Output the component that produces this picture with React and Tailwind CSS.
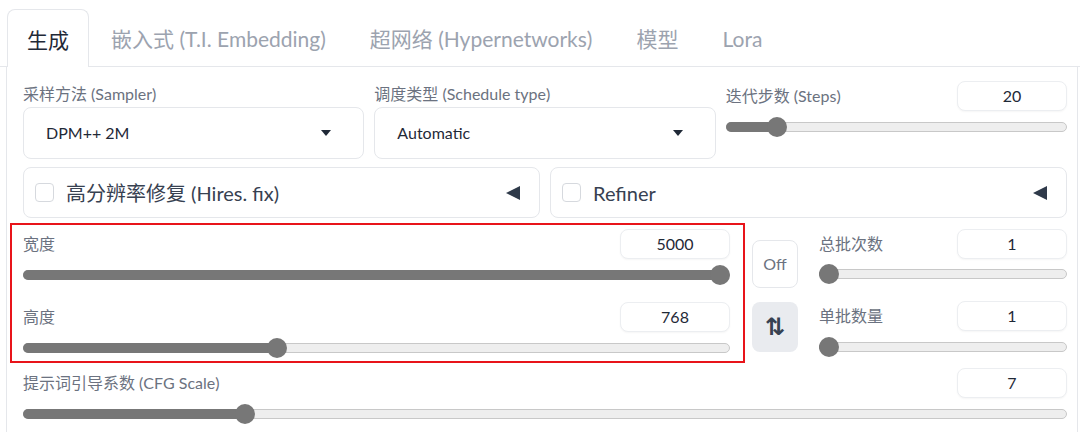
import { useState } from "react";

const font = { fontFamily: 'Lato, "Noto Sans CJK SC", sans-serif' };

function Slider({ pct }) {
  return (
    <div className="relative h-5 w-full">
      <div className="absolute left-0 right-0 top-[5px] h-[10px] rounded-full border border-[#c8c8c8] bg-[#eeeeee]" />
      <div
        className="absolute left-0 top-[5px] h-[10px] rounded-full bg-[#777777]"
        style={{ width: `calc((100% - 20px) * ${pct} + 10px)` }}
      />
      <div
        className="absolute top-0 h-5 w-5 rounded-full bg-[#777777]"
        style={{ left: `calc((100% - 20px) * ${pct})` }}
      />
    </div>
  );
}

function NumBox({ value }) {
  return (
    <div className="flex h-[30px] w-[110px] items-center justify-center rounded-lg border border-[#eceef1] bg-white text-[16px] text-[#1f2937] shadow-[0_1px_2px_rgba(0,0,0,0.04)]">
      {value}
    </div>
  );
}

function SliderField({ label, value, pct, gap = "mt-[6px]" }) {
  return (
    <div className="flex flex-col">
      <div className="flex h-[30px] items-center justify-between">
        <span className="text-[16px] text-[#6b7280]">{label}</span>
        <NumBox value={value} />
      </div>
      <div className={gap}>
        <Slider pct={pct} />
      </div>
    </div>
  );
}

function Dropdown({ label, value }) {
  return (
    <div className="flex flex-col">
      <span className="h-[26px] pt-[3px] text-[16px] leading-5 text-[#6b7280]">{label}</span>
      <div className="flex h-[52px] items-center justify-between rounded-lg border border-[#e5e7eb] bg-white pl-[22px] pr-[32px] text-[16px] text-[#1f2937]">
        <span>{value}</span>
        <svg width="10" height="6" viewBox="0 0 10 6">
          <path d="M0 0 L10 0 L5 6 Z" fill="#1f2937" />
        </svg>
      </div>
    </div>
  );
}

function Accordion({ label }) {
  return (
    <div className="flex h-[51px] items-center justify-between rounded-lg border border-[#e5e7eb] bg-white pl-[11px] pr-[19px]">
      <div className="flex items-center gap-[12px]">
        <div className="h-[19px] w-[19px] rounded-[4px] border border-[#d6d9de] bg-white" />
        <span className="text-[20px] text-[#374151]">{label}</span>
      </div>
      <svg width="14" height="14" viewBox="0 0 14 14">
        <path d="M0 7 L14 0 L14 14 Z" fill="#2f3a4a" />
      </svg>
    </div>
  );
}

export default function App() {
  const [tab] = useState("生成");
  const tabs = ["生成", "嵌入式 (T.I. Embedding)", "超网络 (Hypernetworks)", "模型", "Lora"];

  return (
    <div className="h-[432px] w-[1080px] overflow-hidden bg-white" style={font}>
      <div className="flex h-[67px] items-end border-b border-[#e5e7eb] pl-[7px]">
        {tabs.map((t) =>
          t === tab ? (
            <div
              key={t}
              className="-mb-px flex h-[58px] w-[82px] items-center justify-center rounded-t-lg border border-b-0 border-[#e5e7eb] bg-white pt-[2px] text-[21px] text-[#1f2937]"
            >
              {t}
            </div>
          ) : (
            <div key={t} className="flex h-[57px] items-center px-[22px] pt-[2px] text-[21px] text-[#9ca3af]">
              {t}
            </div>
          )
        )}
      </div>

      <div className="ml-[6px] mr-[2px] h-[365px] border-l border-r border-[#e5e7eb] pl-[16px] pr-[10px] pt-[14px]">
        <div className="grid grid-cols-3 gap-[10px]">
          <Dropdown label="采样方法 (Sampler)" value="DPM++ 2M" />
          <Dropdown label="调度类型 (Schedule type)" value="Automatic" />
          <div className="flex flex-col">
            <SliderField label="迭代步数 (Steps)" value="20" pct={0.1275} />
          </div>
        </div>

        <div className="mt-[8px] grid grid-cols-2 gap-[10px]">
          <Accordion label="高分辨率修复 (Hires. fix)" />
          <Accordion label="Refiner" />
        </div>

        <div className="mt-[11px] flex">
          <div className="relative w-[707px]">
            <div className="pointer-events-none absolute -left-[13px] -right-[15px] -top-[6px] -bottom-[5px] border-2 border-[#e8141a]" />
            <SliderField label="宽度" value="5000" pct={1} />
            <div className="mt-[17px]">
              <SliderField label="高度" value="768" pct={0.355} />
            </div>
          </div>
          <div className="ml-[22px] flex w-[46px] flex-col">
            <div className="mt-[11px] flex h-[48px] items-center justify-center rounded-lg border border-[#e5e7eb] bg-white text-[16px] text-[#6b7280]">
              Off
            </div>
            <div
              className="mt-[14px] flex h-[50px] items-center justify-center rounded-lg bg-[#e9ebef] text-[24px] font-bold text-[#374151]"
              style={{ fontFamily: '"DejaVu Sans", sans-serif' }}
            >
              ⇅
            </div>
          </div>
          <div className="ml-[21px] flex-1">
            <SliderField label="总批次数" value="1" pct={0} gap="mt-[5px]" />
            <div className="mt-[17px]">
              <SliderField label="单批数量" value="1" pct={0} />
            </div>
          </div>
        </div>

        <div className="mt-[10px]">
          <SliderField label="提示词引导系数 (CFG Scale)" value="7" pct={0.207} />
        </div>
      </div>
    </div>
  );
}
